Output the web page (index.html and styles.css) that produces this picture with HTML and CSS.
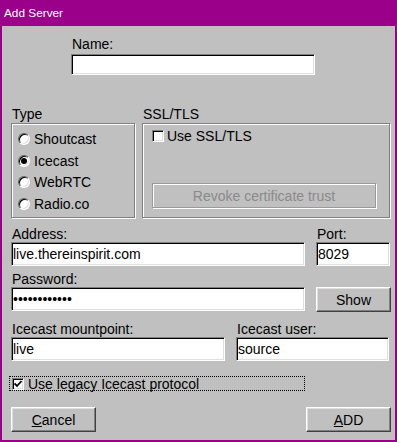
FILE: index.html
```html
<!DOCTYPE html>
<html lang="en">
<head>
    <meta charset="UTF-8">
    <title>Add Server</title>
    <link rel="stylesheet" href="styles.css">
</head>
<body>
    <div class="window">
        <div class="title-bar">Add Server</div>
        <div class="content">
            <div class="name-field">
                <label class="label" for="name">Name:</label>
                <input class="field name-input" id="name" type="text" value="">
            </div>

            <div class="group-row">
                <div class="group-col">
                    <div class="label">Type</div>
                    <div class="group-box type-box">
                        <div class="radio-row"><span class="radio"></span>Shoutcast</div>
                        <div class="radio-row"><span class="radio checked"></span>Icecast</div>
                        <div class="radio-row"><span class="radio"></span>WebRTC</div>
                        <div class="radio-row"><span class="radio"></span>Radio.co</div>
                    </div>
                </div>
                <div class="group-col">
                    <div class="label">SSL/TLS</div>
                    <div class="group-box ssl-box">
                        <div class="check-row"><span class="checkbox"></span>Use SSL/TLS</div>
                        <button class="button disabled revoke-button">Revoke certificate trust</button>
                    </div>
                </div>
            </div>

            <div class="field-row address-row">
                <div>
                    <label class="label" for="address">Address:</label>
                    <input class="field" id="address" type="text" value="live.thereinspirit.com">
                </div>
                <div>
                    <label class="label" for="port">Port:</label>
                    <input class="field" id="port" type="text" value="8029">
                </div>
            </div>

            <div class="field-row password-row">
                <div>
                    <label class="label" for="password">Password:</label>
                    <input class="field" id="password" type="password" value="secretpasswd">
                </div>
                <button class="button show-button">Show</button>
            </div>

            <div class="field-row mount-row">
                <div>
                    <label class="label" for="mount">Icecast mountpoint:</label>
                    <input class="field" id="mount" type="text" value="live">
                </div>
                <div>
                    <label class="label" for="user">Icecast user:</label>
                    <input class="field" id="user" type="text" value="source">
                </div>
            </div>

            <div class="legacy-row">
                <span class="checkbox">
                    <svg width="8" height="8" viewBox="0 0 8 8"><path d="M0.5 3.5 L3 6 L7.5 1" fill="none" stroke="#000" stroke-width="1.8"/></svg>
                </span>Use legacy Icecast protocol
            </div>

            <div class="button-row">
                <button class="button dialog-button"><u>C</u>ancel</button>
                <button class="button dialog-button"><u>A</u>DD</button>
            </div>
        </div>
    </div>
</body>
</html>
```

FILE: styles.css
```css
body {
    margin: 0;
    font-family: 'Liberation Sans', Arial, sans-serif;
    font-size: 14px;
    line-height: 16px;
    color: #000;
}

/* Dialog frame */
.window {
    width: 397px;
    height: 442px;
    box-sizing: border-box;
    background: #c0c0c0;
    border: 2px solid #9a0089;
    border-top: 0;
}

.title-bar {
    height: 26px;
    margin: 0 -2px;
    padding-left: 4px;
    background: #9a0089;
    color: #fff;
    font-size: 11.8px;
    line-height: 26px;
}

.content {
    padding: 0 5px 0 9px;
}

.label {
    display: block;
    height: 16px;
}

/* Sunken text fields */
.field {
    display: block;
    box-sizing: border-box;
    width: 100%;
    height: 24px;
    margin: 0;
    padding: 0 0 0 1px;
    font-family: inherit;
    font-size: 14px;
    color: #000;
    background: #fff;
    border: 1px solid;
    border-color: #808080 #fff #fff #808080;
    box-shadow: inset 1px 1px 0 #000, inset -1px -1px 0 #dfdfdf;
    outline: none;
}

.name-field {
    margin-top: 10px;
    padding-left: 60px;
}

.name-field .label {
    padding-left: 1px;
}

.name-input {
    width: 244px;
    height: 21px;
    margin-top: 2px;
}

/* Group boxes */
.group-row {
    display: grid;
    grid-template-columns: 124px 248px;
    gap: 7px;
    margin-top: 31px;
}

.group-col .label {
    padding-left: 1px;
}

.group-box {
    box-sizing: border-box;
    height: 95px;
    margin-top: 1px;
    border: 1px solid #808080;
    box-shadow: inset 1px 1px 0 #fff, 1px 1px 0 #fff;
}

.type-box {
    padding: 4px 0 0 6px;
}

.radio-row {
    display: flex;
    align-items: center;
    height: 21.7px;
}

.radio {
    position: relative;
    width: 12px;
    height: 12px;
    box-sizing: border-box;
    margin-right: 4px;
    border-radius: 50%;
    background: #fff;
    border: 1px solid;
    border-color: #606060 #fff #fff #606060;
    box-shadow: inset 1px 1px 0 #000, inset -1px -1px 0 #dfdfdf;
}

.radio.checked::after {
    content: '';
    position: absolute;
    top: 2px;
    left: 2px;
    width: 6px;
    height: 6px;
    border-radius: 50%;
    background: #000;
}

.ssl-box {
    padding: 4px 0 0 9px;
}

.check-row {
    display: flex;
    align-items: center;
    height: 16px;
}

.checkbox {
    display: inline-flex;
    align-items: center;
    justify-content: center;
    width: 12px;
    height: 12px;
    box-sizing: border-box;
    margin-right: 3px;
    background: #fff;
    border: 1px solid;
    border-color: #808080 #fff #fff #808080;
    box-shadow: inset 1px 1px 0 #000, inset -1px -1px 0 #dfdfdf;
}

/* Raised buttons */
.button {
    display: block;
    box-sizing: border-box;
    height: 25px;
    margin: 0;
    padding: 0;
    font-family: inherit;
    font-size: 14px;
    color: #000;
    background: #c0c0c0;
    border: 1px solid;
    border-color: #fff #404040 #404040 #fff;
    box-shadow: inset -1px -1px 0 #808080, inset 1px 1px 0 #dfdfdf;
}

.button.disabled {
    color: #8a8a8a;
    border-color: #9a9a9a;
    box-shadow: inset 1px 1px 0 #fff, 1px 1px 0 #fff;
}

.revoke-button {
    width: 224px;
    margin-top: 39px;
}

/* Field rows */
.field-row {
    display: grid;
    grid-template-columns: 294px 74px;
    gap: 11px;
}

.address-row {
    margin-top: 8px;
}

.field-row .label {
    padding-left: 1px;
}

.password-row {
    margin-top: 5px;
    align-items: end;
}

.show-button {
    width: 75px;
    margin-bottom: -1px;
}

.mount-row {
    grid-template-columns: 214px 153px;
    margin-top: 10px;
}

.legacy-row {
    display: flex;
    align-items: center;
    width: 296px;
    height: 15px;
    box-sizing: border-box;
    margin: 15px 0 0 -2px;
    padding-left: 2px;
    border: 1px dotted #000;
}

.legacy-row .checkbox {
    margin-right: 4px;
}

.button-row {
    display: flex;
    justify-content: space-between;
    margin-top: 16px;
    margin-right: -1px;
}

.dialog-button {
    width: 85px;
}
```
